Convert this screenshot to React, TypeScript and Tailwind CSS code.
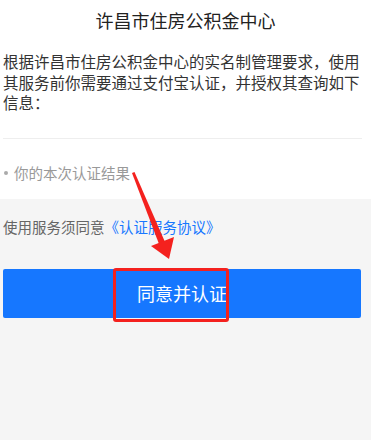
export default function App() {
  return (
    <div
      className="relative h-[440px] w-[371px] overflow-hidden bg-[#f5f5f5]"
      style={{ fontFamily: '"Noto Sans CJK SC", "Noto Sans", sans-serif' }}
    >
      {/* 白色信息区 */}
      <div className="bg-white px-[3px] pb-[16px]">
        <h1 className="pt-[8px] text-center text-[18px] leading-[24px] font-normal text-[#222]">
          许昌市住房公积金中心
        </h1>
        <p className="mt-[19px] text-[15.5px] leading-[20.5px] text-[#333]">
          根据许昌市住房公积金中心的实名制管理要求，使用其服务前你需要通过支付宝认证，并授权其查询如下信息：
        </p>
        <div className="mt-[25px] h-px w-[359px] bg-[#eeeeee]" />
        <div className="mt-[24px] flex items-center text-[14.5px] leading-[20px] text-[#999]">
          <span className="ml-[1px] mr-[6px] h-[4px] w-[4px] rounded-full bg-[#aaa]" />
          你的本次认证结果
        </div>
      </div>

      {/* 协议 + 按钮 */}
      <div className="px-[3px] pt-[18px]">
        <p className="text-[14.5px] leading-[20px] text-[#666]">
          使用服务须同意
          <span className="text-[#1677ff]">《认证服务协议》</span>
        </p>
        <button className="mt-[32px] flex h-[49px] w-[358px] items-center justify-center rounded-[2px] bg-[#1677ff] text-[18px] text-white">
          同意并认证
        </button>
      </div>

      {/* 红色标注 */}
      <div className="absolute left-[113px] top-[268px] h-[54px] w-[116px] rounded-[3px] border-[3px] border-[#f4211e]" />
      <svg className="absolute left-0 top-0" width="371" height="440" viewBox="0 0 371 440">
        <polygon points="132,173 134.5,172 165,242 159,244" fill="#f4211e" />
        <polygon points="151,246 174,237 169,259" fill="#f4211e" />
      </svg>
    </div>
  );
}
